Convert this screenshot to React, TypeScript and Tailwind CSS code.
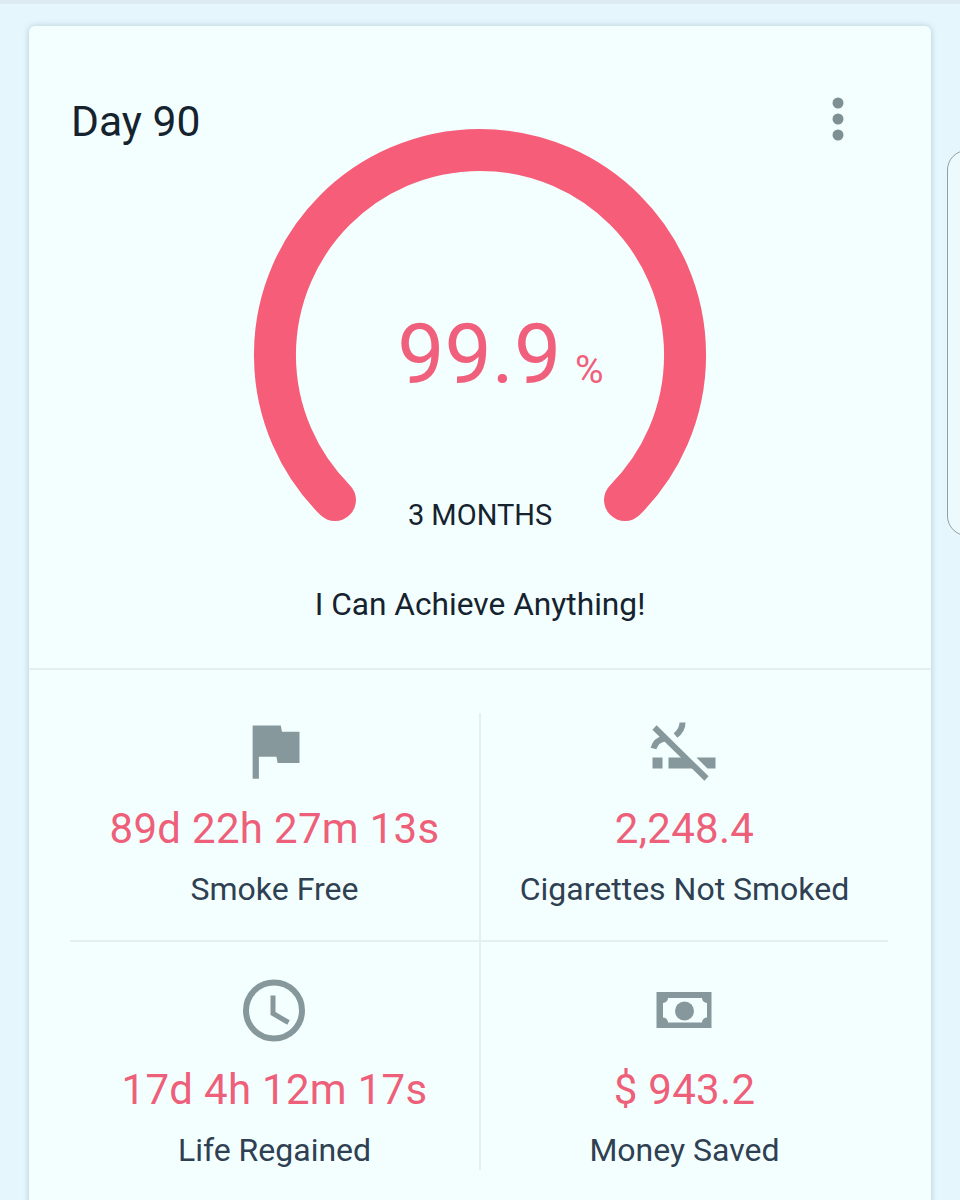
const stats = [
  { icon: <FlagIcon />, value: '89d 22h 27m 13s', label: 'Smoke Free' },
  { icon: <SmokeFreeIcon />, value: '2,248.4', label: 'Cigarettes Not Smoked' },
  { icon: <ClockIcon />, value: '17d 4h 12m 17s', label: 'Life Regained' },
  { icon: <MoneyIcon />, value: '$ 943.2', label: 'Money Saved' },
];

function FlagIcon() {
  return (
    <svg viewBox="0 0 24 24" className="w-[75px] h-[75px] fill-[#86989c]">
      <path d="M14.4 6L14 4H5v17h2v-7h5.6l.4 2h7V6z" />
    </svg>
  );
}

function SmokeFreeIcon() {
  return (
    <svg viewBox="0 0 75 75" className="w-[75px] h-[75px]">
      <path
        d="M5.5 44.5h10v11h-10zM21.5 44.5h17l11 11h-28zM49.5 44.5h19v11h-8z"
        className="fill-[#86989c]"
      />
      <path
        d="M7.5 14.5L59.5 65.5M6.5 35.5C8 30 12 26.5 17.5 25.5M28.5 22.5C33 19 35.5 15 35.5 9.5"
        className="fill-none stroke-[#86989c]"
        strokeWidth="6"
      />
    </svg>
  );
}

function ClockIcon() {
  return (
    <svg viewBox="0 1.5 75 75" className="w-[75px] h-[75px] fill-none stroke-[#86989c]">
      <circle cx="37" cy="38" r="28" strokeWidth="6" />
      <path d="M36 23V41L51.5 50" strokeWidth="5" />
    </svg>
  );
}

function MoneyIcon() {
  return (
    <svg viewBox="0 1.5 75 75" className="w-[75px] h-[75px] fill-[#86989c]">
      <path
        fillRule="evenodd"
        d="M9.5 19.5H64.5V55.5H9.5ZM21 25.5H55A5 5 0 0 0 60 30.5V45A5 5 0 0 0 55 50H21A5 5 0 0 0 16 45V30.5A5 5 0 0 0 21 25.5Z"
      />
      <circle cx="37.5" cy="38.5" r="9.5" />
    </svg>
  );
}

function MoreIcon() {
  return (
    <svg viewBox="0 0 12 44" className="w-3 h-11 fill-[#7e9094]">
      <circle cx="6" cy="6" r="5.5" />
      <circle cx="6" cy="22" r="5.5" />
      <circle cx="6" cy="38" r="5.5" />
    </svg>
  );
}

function Gauge() {
  return (
    <div className="relative w-[454px] h-[394px] mx-auto -mt-4">
      <svg viewBox="0 0 454 394" className="w-[454px] h-[394px]">
        <path
          d="M82 372A205 205 0 1 1 372 372"
          className="fill-none stroke-[#f65d78]"
          strokeWidth="42"
          strokeLinecap="round"
        />
      </svg>
      <div className="absolute left-0 right-0 top-[178px] flex items-baseline justify-center text-[#f0607c] pl-[41px]">
        <span className="text-[84px] leading-[98px]">99.9</span>
        <span className="text-[39px] leading-none ml-[14px]">%</span>
      </div>
      <div className="absolute left-0 right-0 top-[370px] text-center text-[29px] leading-[34px] text-[#15232f]">
        3 MONTHS
      </div>
    </div>
  );
}

export default function App() {
  return (
    <div className="relative w-[960px] h-[1200px] overflow-hidden bg-[#e6f6fd] font-['Roboto',sans-serif]">
      <div className="h-1 bg-[#dcebf1]" />
      <div className="absolute left-[947px] top-[150px] w-[40px] h-[386px] rounded-[28px] border border-[#8f9fa3] bg-[#ecfafe]" />
      <div className="mt-[22px] mx-[29px] pt-[72px] h-[1300px] bg-[#f3ffff] rounded-md shadow-[0_0_6px_rgba(120,150,165,0.45)]">
        <div className="pb-[43px] border-b-2 border-[#e3eff2]">
          <div className="flex items-center justify-between h-[46px] pl-[42px] pr-[87px]">
            <span className="text-[42.6px] leading-[46px] text-[#15232f]">Day 90</span>
            <span className="mb-1 flex">
              <MoreIcon />
            </span>
          </div>
          <Gauge />
          <p className="mt-[63px] text-center text-[31.7px] leading-[40px] text-[#15232f]">
            I Can Achieve Anything!
          </p>
        </div>

        <div className="ml-[41px] mr-[43px] mt-[43px] grid grid-cols-2">
          {stats.map((s, i) => (
            <div
              key={s.label}
              className={
                (i === 1 || i === 3 ? 'border-l-2 border-[#e3eff2] ' : '') +
                (i < 2 ? 'border-b-2 border-b-[#e3eff2] h-[229px] ' : 'h-[228px] pt-[32px] ') +
                'flex flex-col items-center'
              }
            >
              {s.icon}
              <div className="mt-[19px] text-[42px] leading-[44px] tracking-[0.3px] text-[#ee5f7a] whitespace-nowrap">
                {s.value}
              </div>
              <div className="mt-[19px] text-[32px] leading-[38px] text-[#2f4052] whitespace-nowrap">
                {s.label}
              </div>
            </div>
          ))}
        </div>
      </div>
    </div>
  );
}
